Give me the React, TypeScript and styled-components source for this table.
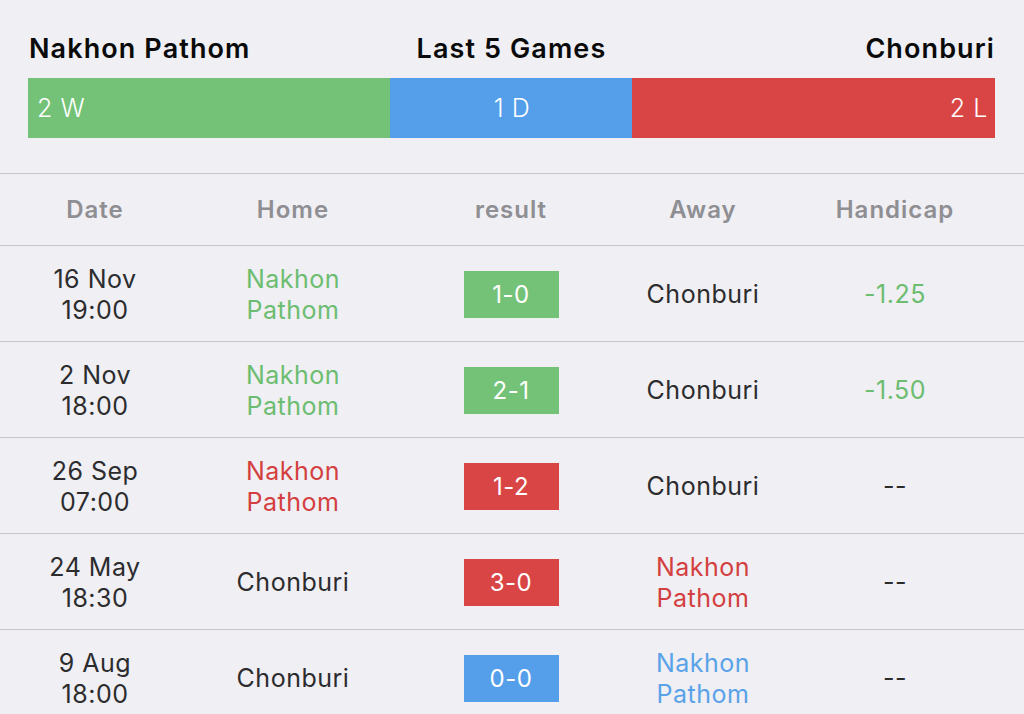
import React from "react";
import styled, { createGlobalStyle } from "styled-components";

const Global = createGlobalStyle`
  html, body { margin: 0; padding: 0; background: #efeff4; }
  body { font-family: Inter, "Noto Sans", "Liberation Sans", sans-serif; -webkit-font-smoothing: antialiased; }
  * { box-sizing: border-box; }
`;

const Page = styled.div`
  width: 1024px;
  height: 714px;
  overflow: hidden;
  background: #efeff4;
`;

const Summary = styled.div`
  padding: 31px 29px 35px 28px;
  border-bottom: 1px solid #c6c6ca;
`;

const TitleRow = styled.div`
  display: grid;
  grid-template-columns: 1fr auto 1fr;
  align-items: center;
  height: 34px;
  margin-bottom: 13px;
`;

const Title = styled.div<{ $align: "left" | "center" | "right" }>`
  font-size: 27px;
  font-weight: 600;
  letter-spacing: 1.1px;
  color: #0a0a0a;
  white-space: nowrap;
  text-align: ${(p) => p.$align};
  padding-left: ${(p) => (p.$align === "left" ? "1px" : "0")};
`;

const Bar = styled.div`
  display: flex;
  height: 60px;
`;

const Segment = styled.div<{ $bg: string; $align: string; $w: number }>`
  flex: 0 0 ${(p) => p.$w}px;
  background: ${(p) => p.$bg};
  color: #ffffff;
  font-size: 25px;
  font-weight: 300;
  display: flex;
  align-items: center;
  justify-content: ${(p) => p.$align};
  padding: 0 7px 0 9px;
  letter-spacing: 0.6px;
`;

const Grid = styled.div`
  display: grid;
  grid-template-columns: 190px 206px 230px 154px 230px;
`;

const HeadRow = styled(Grid)`
  height: 72px;
  border-bottom: 1px solid #c6c6ca;
  align-items: center;
`;

const HeadCell = styled.div`
  text-align: center;
  font-size: 24px;
  font-weight: 600;
  letter-spacing: 1px;
  color: #8e8e93;
  padding-bottom: 1px;
`;

const Row = styled(Grid)`
  height: 96px;
  border-bottom: 1px solid #c6c6ca;
  align-items: center;
  padding-top: 2px;
`;

const Cell = styled.div<{ $color?: string }>`
  text-align: center;
  font-size: 25px;
  letter-spacing: 0.5px;
  line-height: 31px;
  color: ${(p) => p.$color || "#2c2c2e"};
  display: flex;
  justify-content: center;
  align-items: center;
`;

const Badge = styled.div<{ $bg: string }>`
  width: 95px;
  height: 47px;
  background: ${(p) => p.$bg};
  color: #ffffff;
  font-size: 24px;
  letter-spacing: 0.5px;
  display: flex;
  align-items: center;
  justify-content: center;
`;

const GREEN = "#73c277";
const BLUE = "#559ee9";
const RED = "#d94545";
const GREEN_T = "#6cbd70";
const RED_T = "#d43f3f";
const BLUE_T = "#5aa2e8";

type Game = {
  date: string;
  time: string;
  home: string;
  homeColor?: string;
  score: string;
  scoreBg: string;
  away: string;
  awayColor?: string;
  hc: string;
  hcColor?: string;
};

const games: Game[] = [
  { date: "16 Nov", time: "19:00", home: "Nakhon\nPathom", homeColor: GREEN_T, score: "1-0", scoreBg: GREEN, away: "Chonburi", hc: "-1.25", hcColor: GREEN_T },
  { date: "2 Nov", time: "18:00", home: "Nakhon\nPathom", homeColor: GREEN_T, score: "2-1", scoreBg: GREEN, away: "Chonburi", hc: "-1.50", hcColor: GREEN_T },
  { date: "26 Sep", time: "07:00", home: "Nakhon\nPathom", homeColor: RED_T, score: "1-2", scoreBg: RED, away: "Chonburi", hc: "--" },
  { date: "24 May", time: "18:30", home: "Chonburi", score: "3-0", scoreBg: RED, away: "Nakhon\nPathom", awayColor: RED_T, hc: "--" },
  { date: "9 Aug", time: "18:00", home: "Chonburi", score: "0-0", scoreBg: BLUE, away: "Nakhon\nPathom", awayColor: BLUE_T, hc: "--" },
];

const Lines = ({ text }: { text: string }) => (
  <span>
    {text.split("\n").map((t, i) => (
      <React.Fragment key={i}>
        {i > 0 && <br />}
        {t}
      </React.Fragment>
    ))}
  </span>
);

export default function App() {
  return (
    <Page>
      <Global />
      <Summary>
        <TitleRow>
          <Title $align="left">Nakhon Pathom</Title>
          <Title $align="center">Last 5 Games</Title>
          <Title $align="right">Chonburi</Title>
        </TitleRow>
        <Bar>
          <Segment $bg={GREEN} $align="flex-start" $w={362}>2 W</Segment>
          <Segment $bg={BLUE} $align="center" $w={242}>1 D</Segment>
          <Segment $bg={RED} $align="flex-end" $w={363}>2 L</Segment>
        </Bar>
      </Summary>
      <HeadRow>
        <HeadCell>Date</HeadCell>
        <HeadCell>Home</HeadCell>
        <HeadCell>result</HeadCell>
        <HeadCell>Away</HeadCell>
        <HeadCell>Handicap</HeadCell>
      </HeadRow>
      {games.map((g, i) => (
        <Row key={i}>
          <Cell><Lines text={`${g.date}\n${g.time}`} /></Cell>
          <Cell $color={g.homeColor}><Lines text={g.home} /></Cell>
          <Cell><Badge $bg={g.scoreBg}>{g.score}</Badge></Cell>
          <Cell $color={g.awayColor}><Lines text={g.away} /></Cell>
          <Cell $color={g.hcColor}>{g.hc}</Cell>
        </Row>
      ))}
    </Page>
  );
}
